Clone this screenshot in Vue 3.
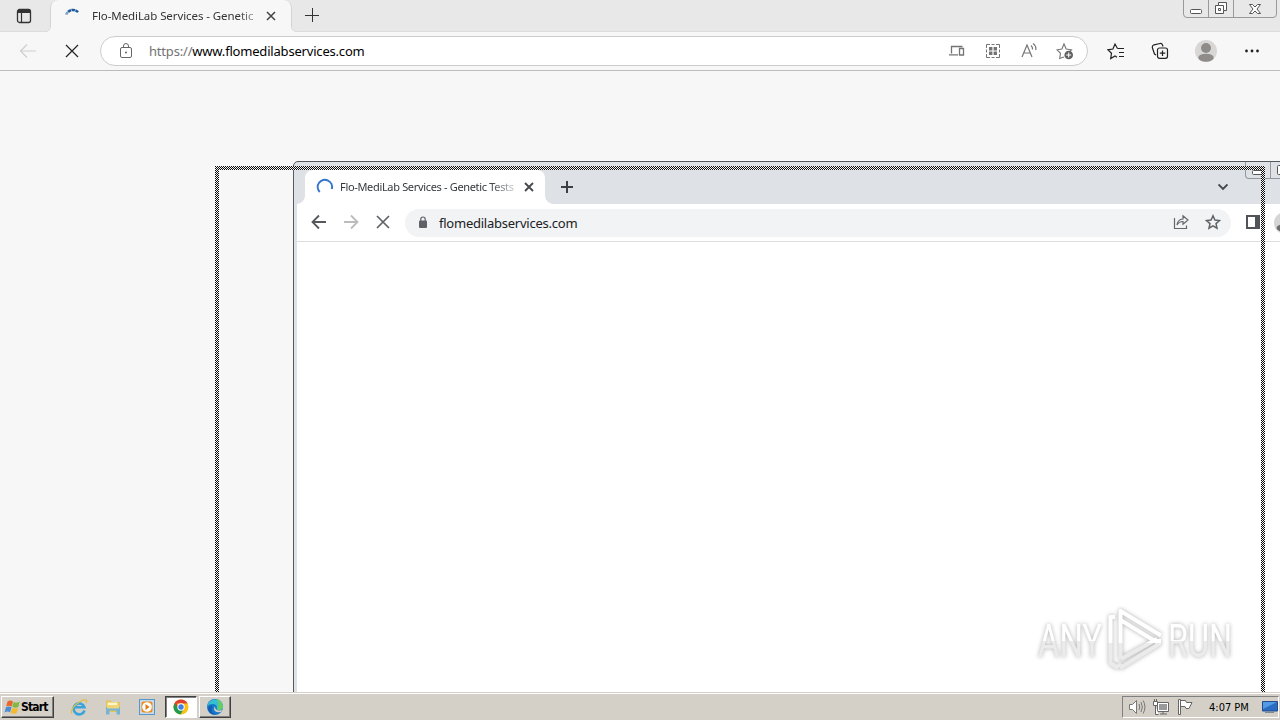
<template>
  <div class="desktop">
    <!-- Edge -->
    <section class="edge">
      <header class="edge-tabs">
        <button class="tab-actions">
          <svg width="16" height="16" viewBox="0 0 16 16">
            <rect x="1.5" y="1.5" width="13" height="13" rx="2" fill="none" stroke="#333" stroke-width="1.3" />
            <path d="M2 2h12v3H2z" fill="#333" />
            <path d="M5.5 5v9" stroke="#333" stroke-width="1.2" />
          </svg>
        </button>
        <div class="edge-tab">
          <svg class="edge-spinner" width="18" height="18" viewBox="0 0 18 18">
            <path d="M2.2 7.6A7 7 0 0 1 4 4.9" stroke="#7e9fc0" />
            <path d="M4.2 4.7A7 7 0 0 1 14.2 5.4" stroke="#1b5a9c" stroke-dasharray="3.2 .5" />
          </svg>
          <span class="edge-title">Flo-MediLab Services - Genetic</span>
          <svg class="edge-close" width="10" height="10" viewBox="0 0 10 10">
            <path d="M1 1l8 8M9 1L1 9" stroke="#444" stroke-width="1.5" />
          </svg>
        </div>
        <svg class="edge-new" width="14" height="14" viewBox="0 0 14 14">
          <path d="M7.5 0v14M0 7.5h14" stroke="#333" />
        </svg>
        <div class="caption">
          <span class="cap min">
            <svg width="14" height="14"><rect x="1.5" y="8.5" width="11" height="4" rx="1" fill="#fff" stroke="#555" /></svg>
          </span>
          <span class="cap max">
            <svg width="14" height="14">
              <path d="M4.5 1.5h8v8h-3v3h-8v-8h3z" fill="#fff" stroke="#555" />
              <path d="M4.5 4.5h5v5M4.5 7.5h2v2h-2z" fill="none" stroke="#555" />
            </svg>
          </span>
          <span class="cap shut">
            <svg width="14" height="14"><path d="M1.5 3.5h3l2.500 2.500 2.500-2.500h3l-3.500 4.500 3.500 4.500h-3L7 10l-2.500 2.500h-3L5 8z" fill="#fff" stroke="#555" /></svg>
          </span>
        </div>
      </header>
      <div class="edge-bar">
        <svg class="edge-back" width="18" height="16" viewBox="0 0 18 16">
          <path d="M17 8H1.5M8 1.5L1.5 8 8 14.5" fill="none" stroke="#cfcfcf" stroke-width="1.2" />
        </svg>
        <svg class="edge-stop" width="14" height="14" viewBox="0 0 14 14">
          <path d="M1 1l12 12M13 1L1 13" stroke="#222" stroke-width="1.2" />
        </svg>
        <div class="edge-omni">
          <svg class="edge-lock" width="14" height="16" viewBox="0 0 14 16">
            <rect x="1.5" y="4.500" width="11" height="10" rx="1.5" fill="none" stroke="#666" />
            <path d="M4.500 4.500V3a2.500 2.500 0 0 1 5 0v1.500" fill="none" stroke="#666" />
            <circle cx="7" cy="9.500" r="1" fill="#666" />
          </svg>
          <span class="edge-url"><i>https://</i><b>www.flomedilabservices.com</b></span>
          <div class="omni-icons">
            <svg width="18" height="18" viewBox="0 0 18 18" fill="none" stroke="#747474">
              <path d="M3.5 11.5v-7h11M1 12.800h9M11.5 6.500h4v6.500h-4z" stroke-width="1.3" />
            </svg>
            <svg width="18" height="18" viewBox="0 0 18 18" fill="none" stroke="#747474">
              <path d="M2.500 6V2.500H6M12 2.500h3.500V6M15.500 12v3.500H12M6 15.500H2.500V12M7.500 2.500h3M7.500 15.500h3M2.500 7.500v3M15.500 7.500v3" />
              <path d="M5 5h3.400v3.400H5zM9.600 5H13v3.400H9.600zM5 9.600h3.400V13H5zM9.600 9.600H13V13H9.600z" fill="#747474" stroke="none" />
            </svg>
            <svg width="18" height="18" viewBox="0 0 18 18" fill="none" stroke="#747474">
              <path d="M2 15L7 3l5 12M3.700 11h6.600M11 3.500q1.800 1.500 1.500 4M13 1.500q3.500 2.500 2.800 6.500" stroke-width="1.2" />
            </svg>
            <svg width="18" height="18" viewBox="0 0 18 18" fill="none" stroke="#747474">
              <path d="M8 15l-4.300 1.500.8-5.200L1 7.800l4.900-.8L8 2l2.200 5 5.300.8-1.800 1.700" stroke-width="1.1" />
              <circle cx="12.700" cy="13" r="4.300" fill="#606060" stroke="none" />
              <path d="M12.700 10.500v5M10.200 13h5" stroke="#fff" />
            </svg>
          </div>
        </div>
        <div class="edge-tools">
          <svg width="18" height="18" viewBox="0 0 18 18" fill="none" stroke="#222" stroke-width="1.2">
            <path d="M10.500 6.500H17M12 10.500h5M12 14.500h5M10.500 6.500L8 2 5.900 7 1 7.800l3.500 3.500-.8 5.200L8 14l2 1.200" />
          </svg>
          <svg width="18" height="18" viewBox="0 0 18 18" fill="none" stroke="#222" stroke-width="1.2">
            <rect x="6.500" y="6" width="10" height="10.300" rx="2" />
            <path d="M11.500 8.500v5.500M8.800 11.200h5.500M5 13L3.500 12 1.300 5.500Q1 3.500 3 2.800l6-1.300q2-.3 2.500 1.500l.5 1.500" />
          </svg>
          <svg width="22" height="22" viewBox="0 0 22 22">
            <circle cx="11" cy="11" r="11" fill="#d9d7d5" />
            <circle cx="11" cy="8" r="5" fill="#8f8b88" />
            <ellipse cx="11" cy="17.700" rx="7.700" ry="4" fill="#8f8b88" />
          </svg>
          <svg width="18" height="18" viewBox="0 0 18 18" fill="#222">
            <circle cx="3.500" cy="9" r="1.400" /><circle cx="9" cy="9" r="1.400" /><circle cx="14.500" cy="9" r="1.400" />
          </svg>
        </div>
      </div>
      <main class="edge-page"></main>
    </section>

    <!-- Chrome -->
    <section class="chrome">
      <header class="chrome-tabs">
        <div class="chrome-tab">
          <svg width="18" height="18" viewBox="0 0 18 18">
            <path d="M3.700 14A7.200 7.200 0 1 1 15.800 11" fill="none" stroke="#3575cf" stroke-width="2" />
          </svg>
          <span class="chrome-title">Flo-MediLab Services - Genetic Tests</span>
          <svg class="chrome-close" width="10" height="10" viewBox="0 0 10 10">
            <path d="M1 1l8 8M9 1L1 9" stroke="#45484c" stroke-width="1.8" />
          </svg>
        </div>
        <svg class="chrome-new" width="12" height="12" viewBox="0 0 12 12">
          <path d="M6 0v12M0 6h12" stroke="#3c4043" stroke-width="2" />
        </svg>
        <svg class="chrome-search" width="10" height="8" viewBox="0 0 10 8">
          <path d="M.5 1.500L5 6 9.500 1.500" fill="none" stroke="#45484c" stroke-width="1.9" />
        </svg>
        <div class="chrome-caption">
          <span class="cap min"><svg width="14" height="14"><rect x="1.5" y="8.500" width="11" height="4" rx="1" fill="#fff" stroke="#555" /></svg></span>
          <span class="cap max"><svg width="14" height="14"><rect x="1.5" y="3.500" width="11" height="9" rx="1" fill="#fff" stroke="#555" /></svg></span>
        </div>
      </header>
      <div class="chrome-bar">
        <div class="chrome-nav">
          <svg width="16" height="16" viewBox="0 0 16 16"><path d="M15 8H2M8 1.500L1.500 8 8 14.500" fill="none" stroke="#55585c" stroke-width="1.8" /></svg>
          <svg width="16" height="16" viewBox="0 0 16 16"><path d="M1 8h13M8 1.500L14.500 8 8 14.500" fill="none" stroke="#babcbe" stroke-width="1.8" /></svg>
          <svg width="16" height="16" viewBox="0 0 16 16"><path d="M2 2l12 12M14 2L2 14" stroke="#5f6368" stroke-width="1.7" /></svg>
        </div>
        <div class="chrome-omni">
          <svg class="chrome-lock" width="10" height="13" viewBox="0 0 10 13">
            <rect x="1" y="4.500" width="8" height="7.500" rx="1" fill="#5f6368" />
            <path d="M2.800 5V3.200a2.200 2.200 0 0 1 4.400 0V5" fill="none" stroke="#5f6368" stroke-width="1.2" />
          </svg>
          <span class="chrome-url">flomedilabservices.com</span>
          <svg class="share" width="18" height="16" viewBox="0 0 18 16" fill="none" stroke="#63666a" stroke-width="1.2">
            <path d="M2.500 4v10.500h12v-3" />
            <path d="M5 11q.5-5.500 6-6V1.800L16 6l-5 4.200V7.500Q7 7.500 5 11z" />
          </svg>
          <svg width="16" height="16" viewBox="0 0 16 16">
            <path d="M8 1.800l1.900 4.300 4.600.4L11 9.600l1 4.600-4-2.400-4 2.400 1-4.600-3.500-3.100 4.600-.4z" fill="none" stroke="#5f6368" stroke-width="1.5" />
          </svg>
        </div>
        <svg class="side-panel" width="14" height="14" viewBox="0 0 14 14">
          <path d="M1 1h12v12H1z" fill="#fff" stroke="#505357" stroke-width="2" />
          <path d="M9 1h5v12H9z" fill="#505357" />
        </svg>
        <svg class="chrome-avatar" width="22" height="22" viewBox="0 0 22 22">
          <circle cx="11" cy="11" r="11" fill="#d5d5d5" />
          <circle cx="11" cy="8" r="4.500" fill="#6d6d6d" />
          <ellipse cx="11" cy="16" rx="8.500" ry="4" fill="#6d6d6d" />
        </svg>
      </div>
      <main class="chrome-page"></main>
    </section>

    <!-- outline of the window being dragged -->
    <svg class="drag-frame" width="1050" height="528">
      <defs>
        <pattern id="dither" width="2" height="2" patternUnits="userSpaceOnUse">
          <path d="M0 0h1v1H0zM1 1h1v1H1z" fill="#0c0c0c" />
          <path d="M1 0h1v1H1zM0 1h1v1H0z" fill="#f4f4f4" />
        </pattern>
      </defs>
      <path d="M0 0H1050V528H1046V4H4V528H0z" fill="url(#dither)" shape-rendering="crispEdges" />
    </svg>

    <!-- ANY.RUN watermark -->
    <svg class="watermark" width="202" height="70" viewBox="0 0 202 70">
      <defs>
        <linearGradient id="shade" gradientUnits="userSpaceOnUse" x1="0" y1="0" x2="0" y2="70">
          <stop offset=".5" stop-color="#fff" />
          <stop offset=".5" stop-color="#ebebeb" />
        </linearGradient>
      </defs>
      <text x="2" y="51" textLength="64" lengthAdjust="spacingAndGlyphs">ANY</text>
      <text x="132" y="51" textLength="64" lengthAdjust="spacingAndGlyphs">RUN</text>
      <g fill="none" stroke="url(#shade)" stroke-width="4" stroke-linejoin="round" transform="translate(70 2)">
        <path d="M9 9H4.500v46l6 4 5-3" />
        <path d="M14.500 51V3L55 27.500M14.500 12L52 35M53 31v5L14 60M15 51l36-20" />
      </g>
    </svg>

    <!-- taskbar -->
    <footer class="taskbar">
      <button class="start">
        <svg width="17" height="16" viewBox="0 0 17 16">
          <path d="M3.500 2.500q3-2 5.500 0L7.700 7.500q-3-1.500-5.500 0z" fill="#e9662c" />
          <path d="M9.700 3q3 1.500 6-.5L14.300 8q-3 1.500-6-.3z" fill="#80b840" />
          <path d="M2 8.300q3-1.800 5.500 0L6 13.500q-2.500-1.800-5.500 0z" fill="#4a8cd5" />
          <path d="M8.200 8.700q3 1.700 6 .2L12.700 14q-3 1.700-6-.3z" fill="#f4b92c" />
        </svg>
        Start
      </button>
      <div class="quick">
        <svg width="18" height="18" viewBox="0 0 18 18">
          <path d="M14.500 12.500A5.500 5.500 0 1 1 14.500 9.300H4" fill="none" stroke="#3ba4db" stroke-width="2.6" />
          <path d="M1.700 15.500C-.5 10 12 .5 16 2q1.200 1 .2 3" fill="none" stroke="#e6bd3b" stroke-width="1.3" />
        </svg>
        <svg width="18" height="18" viewBox="0 0 18 18">
          <path d="M2 2.500h5l1 1.500h8v10H2z" fill="#e3c35c" />
          <path d="M3.500 4.500h10v3h-10z" fill="#fff6c5" />
          <path d="M2 9h14v7.500h-3.500v-4h-7v4H2z" fill="#74b4d6" />
          <path d="M3 7h12v3.500H3z" fill="#eed577" />
        </svg>
        <svg width="18" height="18" viewBox="0 0 18 18">
          <rect x="1.500" y="1.500" width="15" height="15" fill="#c4dcef" stroke="#5796cb" />
          <rect x="3.500" y="3.500" width="11" height="11" rx="2" fill="#f28a18" />
          <circle cx="9" cy="9" r="4.800" fill="#fff" />
          <path d="M7.500 6l4 3-4 3z" fill="#e87712" />
        </svg>
      </div>
      <button class="task active">
        <svg width="16" height="16" viewBox="0 0 16 16">
          <circle cx="8" cy="8" r="7.500" fill="#fbc116" />
          <path d="M8 8L1.500 4.200A7.500 7.500 0 0 0 7.500 15.500L11 9.500z" fill="#229b4e" />
          <path d="M4 4.500h10.600A7.500 7.500 0 0 0 1.500 4.200L4.500 9z" fill="#df4232" />
          <circle cx="8" cy="8" r="3.700" fill="#fff" /><circle cx="8" cy="8" r="2.700" fill="#407fe5" />
        </svg>
      </button>
      <button class="task">
        <svg width="18" height="18" viewBox="0 0 18 18">
          <circle cx="9" cy="9" r="8" fill="#1779c9" />
          <path d="M1.200 8A8 8 0 0 1 17 8.500q0 4-5 3.500-2-.5-1-2Q11 6 6.500 6 3 6 1.200 8z" fill="#36bfd0" />
          <path d="M10 1.100A8 8 0 0 1 17 9q-.5 4-6 2.500.5-.8.500-2Q14 5 10 1.100z" fill="#63cd6a" />
          <path d="M10 8q-2 1 0 3.500 2.500 1.500 6 .5l-1 2q-6 1-7-3 0-2.500 2-3z" fill="#d4d0c8" />
          <path d="M6.500 7.500q-3 6 3 9.300Q3 16.500 2 11q0-3.500 4.500-3.500z" fill="#155bb2" />
        </svg>
      </button>
      <div class="tray">
        <svg width="18" height="16" viewBox="0 0 18 16" fill="#fff" stroke="#777">
          <path d="M1.500 5.500h3l4-4v13l-4-4h-3z" />
          <path d="M11 5q1.500 3 0 6M13 3q2.700 5 0 10M15.200 1.500q3.500 6.500 0 13" fill="none" />
        </svg>
        <svg width="18" height="18" viewBox="0 0 18 18" fill="#fff" stroke="#666">
          <path d="M5.500 4.500h11v9h-11z" /><path d="M7 6h8v6H7z" fill="#999" stroke="none" />
          <path d="M1.500 3.500h4v4h-4zM2.500 1v2.500M4.500 1v2.500M3.500 8v8.500h3M8 16h7M11 13.500v2.500" />
        </svg>
        <svg width="18" height="18" viewBox="0 0 18 18" fill="#fff" stroke="#666">
          <path d="M2.500 1.500h2v15h-2zM4.500 2.500h5l1 2h5.500l-3 6h-3l-1-2h-4.500z" />
        </svg>
        <time>4:07 PM</time>
        <svg width="16" height="14" viewBox="0 0 16 14">
          <path d="M.5 1.500h15v9.500H.5z" fill="#2a6cc1" stroke="#204b8c" />
          <path d="M1 2h14L1 9z" fill="#529ae3" /><path d="M3 12.500h9" stroke="#7f8994" />
        </svg>
      </div>
    </footer>
  </div>
</template>

<script setup>
</script>

<style>
body {
  margin: 0;
  overflow: hidden;
}
</style>

<style scoped>
.desktop {
  position: relative;
  width: 1280px;
  height: 720px;
  overflow: hidden;
  display: flex;
  flex-direction: column;
  font-family: "Noto Sans", "Open Sans", sans-serif;
}

svg {
  display: block;
  flex: none;
}

button {
  border: 0;
  padding: 0;
  background: none;
}

.edge {
  flex: 1;
  display: flex;
  flex-direction: column;
  background: #f7f7f7;
}

.edge-tabs {
  height: 32px;
  box-sizing: border-box;
  display: flex;
  background: #e8e8e8;
  border-bottom: 1px solid #dcdcdc;
}

.tab-actions {
  width: 50px;
  padding-left: 16px;
}

.edge-tab {
  position: relative;
  box-sizing: border-box;
  width: 242px;
  height: 32px;
  display: flex;
  align-items: center;
  background: #f7f7f7;
  border: 1px solid #d4d4d4;
  border-top: 0;
  border-bottom: 0;
  border-radius: 8px 8px 0 0;
}

.edge-tab::before,
.edge-tab::after {
  content: "";
  position: absolute;
  bottom: 0;
  width: 6px;
  height: 6px;
}

.edge-tab::before {
  left: -6px;
  background: radial-gradient(circle at 0 0, #e8e8e8 5px, #d4d4d4 5.5px, #f7f7f7 6.5px);
}

.edge-tab::after {
  right: -6px;
  background: radial-gradient(circle at 100% 0, #e8e8e8 5px, #d4d4d4 5.5px, #f7f7f7 6.5px);
}

.edge-spinner {
  margin: 0 0 0 13px;
  fill: none;
  stroke-width: 2.5;
}

.edge-title {
  margin: 0 0 1px 10px;
  width: 163px;
  overflow: hidden;
  white-space: nowrap;
  font-size: 11.5px;
  letter-spacing: -0.08px;
  color: #333;
  mask-image: linear-gradient(90deg, #000 90%, rgba(0, 0, 0, 0.4));
}

.edge-close {
  margin-left: 11px;
}

.edge-new {
  margin: 8px 0 0 13px;
}

.caption {
  margin: -1px 3px 0 auto;
  height: 17px;
  display: flex;
  border: 1px solid #999;
  border-radius: 0 0 4px 4px;
}

.cap {
  display: flex;
  justify-content: center;
}

.min,
.max {
  width: 24px;
  border-right: 1px solid #999;
}

.shut {
  width: 42px;
}

.caption svg {
  margin-top: 1px;
}

.edge-bar {
  height: 38px;
  display: flex;
  align-items: center;
  border-bottom: 1px solid #bcbcbc;
}

.edge-back {
  margin-left: 19px;
}

.edge-stop {
  margin-left: 28px;
}

.edge-omni {
  box-sizing: border-box;
  width: 988px;
  height: 30px;
  margin-left: 21px;
  display: flex;
  align-items: center;
  background: #fff;
  border: 1px solid #ccc;
  border-radius: 15px;
}

.edge-lock {
  margin-left: 18px;
}

.edge-url {
  margin-left: 16px;
  font-size: 13px;
  letter-spacing: -0.19px;
  white-space: nowrap;
}

.edge-url i,
.edge-url b {
  font-style: normal;
  font-weight: normal;
}

.edge-url i {
  color: #737373;
}

.edge-url b {
  color: #000;
}

.omni-icons {
  display: flex;
  gap: 18px;
  margin: 0 13px 0 auto;
}

.edge-tools {
  display: flex;
  align-items: center;
  justify-content: space-between;
  width: 154px;
  margin-left: 19px;
}

.edge-page {
  flex: 1;
}

.chrome {
  position: absolute;
  left: 293px;
  top: 161px;
  width: 1050px;
  height: 540px;
  box-sizing: border-box;
  padding-left: 3px;
  display: flex;
  flex-direction: column;
  border: 1px solid #555b60;
  border-radius: 5px 5px 0 0;
  background: #dee1e6;
}

.chrome-tabs {
  height: 42px;
  display: flex;
}

.chrome-tab {
  position: relative;
  width: 240px;
  height: 34px;
  margin: 8px 0 0 8px;
  display: flex;
  align-items: center;
  border-radius: 8px 8px 0 0;
  background: #fff;
}

.chrome-tab::before,
.chrome-tab::after {
  content: "";
  position: absolute;
  bottom: 0;
  width: 8px;
  height: 8px;
}

.chrome-tab::before {
  left: -8px;
  background: radial-gradient(circle at 0 0, #dee1e6 7.5px, #fff 8px);
}

.chrome-tab::after {
  right: -8px;
  background: radial-gradient(circle at 100% 0, #dee1e6 7.5px, #fff 8px);
}

.chrome-tab svg:first-child {
  margin-left: 11px;
}

.chrome-title {
  width: 174px;
  margin: 0 0 1px 6px;
  overflow: hidden;
  white-space: nowrap;
  font-size: 11px;
  letter-spacing: -0.33px;
  color: #35383b;
  mask-image: linear-gradient(90deg, #000 86%, rgba(0, 0, 0, 0.25));
}

.chrome-close {
  margin-left: 10px;
}

.chrome-new {
  margin: 19px 0 0 16px;
}

.chrome-search {
  margin: 21px 0 0 645px;
}

.chrome-caption {
  height: 16px;
  margin-left: 17px;
  display: flex;
  border: 1px solid #92979d;
  border-top: 0;
  border-radius: 0 0 0 4px;
}

.chrome-bar {
  height: 37px;
  display: flex;
  align-items: center;
  background: #fff;
  border-bottom: 1px solid #dcdee0;
}

.chrome-nav {
  display: flex;
  gap: 16px;
  margin: 0 0 1px 14px;
}

.chrome-omni {
  width: 826px;
  height: 28px;
  margin-left: 14px;
  display: flex;
  align-items: center;
  background: #f1f3f4;
  border-radius: 14px;
}

.chrome-lock {
  margin: 0 0 1px 13px;
}

.chrome-url {
  margin-left: 11px;
  font-size: 13px;
  letter-spacing: -0.24px;
  color: #202124;
}

.share {
  margin: 0 15px 1px auto;
}

.chrome-omni svg:last-child {
  margin: 0 10px 1px 0;
}

.side-panel {
  margin: 0 0 1px 15px;
}

.chrome-avatar {
  margin-left: 14px;
}

.chrome-page {
  flex: 1;
  background: #fff;
}

.drag-frame {
  position: absolute;
  left: 215px;
  top: 166px;
}

.watermark {
  position: absolute;
  left: 1036px;
  top: 606px;
  filter: drop-shadow(0 0 2px rgba(0, 0, 0, 0.32));
}

.watermark text {
  font: 46px "Roboto", "Liberation Sans", sans-serif;
  fill: url(#shade);
}

.taskbar {
  position: relative;
  height: 28px;
  box-sizing: border-box;
  display: flex;
  align-items: center;
  border-top: 1px solid #d4d0c8;
  box-shadow: inset 0 1px #fff;
  background: #d4d0c8;
  font-family: "DejaVu Sans Condensed", "DejaVu Sans", sans-serif;
}

.start {
  width: 53px;
  height: 22px;
  margin: 1px 0 0 1px;
  padding-left: 2px;
  display: flex;
  align-items: center;
  font: bold 12px "DejaVu Sans Condensed", "DejaVu Sans", sans-serif;
  letter-spacing: -0.8px;
  color: #000;
}

.start,
.task {
  box-sizing: border-box;
  border: 1px solid;
  border-color: #fff #404040 #404040 #fff;
  box-shadow: inset -1px -1px #808080;
}

.quick {
  display: flex;
  gap: 16px;
  margin: 1px 8px 0 16px;
}

.task {
  width: 32px;
  height: 22px;
  margin: 1px 1px 0 1px;
  display: flex;
  align-items: center;
  justify-content: center;
}

.active {
  border-color: #404040 #fff #fff #404040;
  box-shadow: inset 1px 1px #808080;
  background: #fff;
}

.tray {
  box-sizing: border-box;
  width: 157px;
  height: 22px;
  margin: 1px 1px 0 auto;
  padding-left: 5px;
  display: flex;
  align-items: center;
  gap: 6px;
  border: 1px solid;
  border-color: #808080 #fff #fff #808080;
}

.tray time {
  width: 43px;
  margin: 0 4px 0 9px;
  white-space: nowrap;
  font-size: 11px;
  color: #000;
}
</style>
